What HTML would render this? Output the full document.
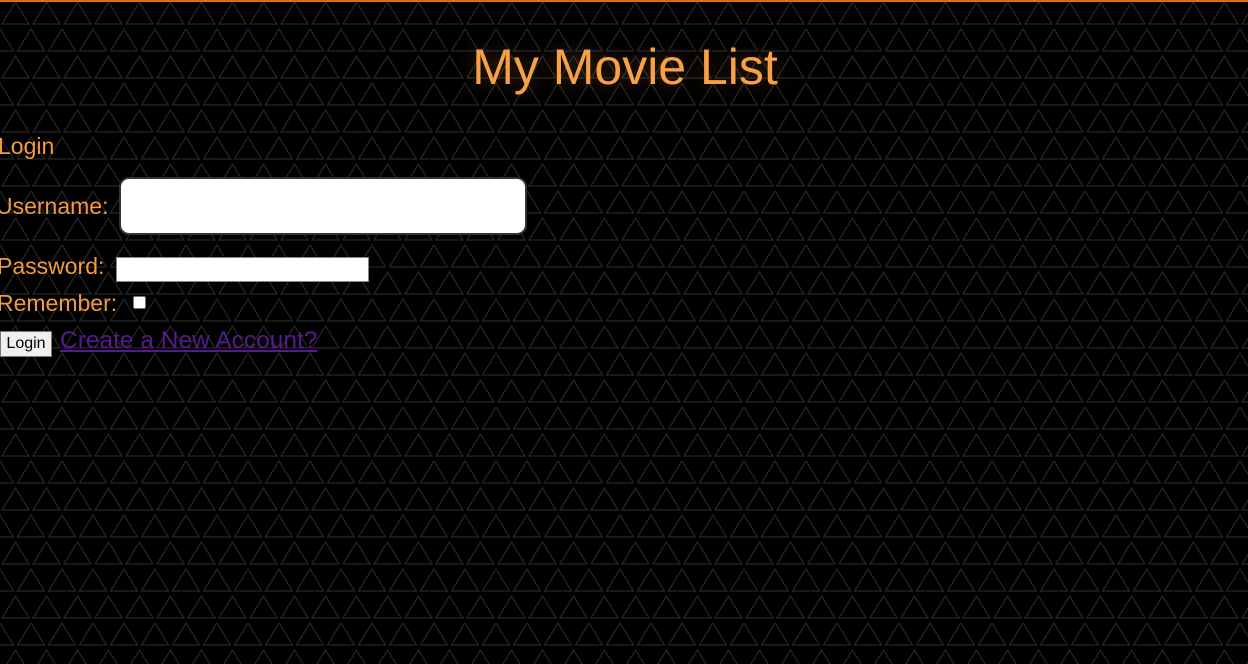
<!DOCTYPE html>
<html><head><style>
html,body{margin:0;padding:0;width:1248px;height:664px;overflow:hidden;background:#000;}
body{font-family:"Liberation Sans",Arial,sans-serif;color:#f39a3c;position:relative;}
.bg{position:absolute;left:0;top:0;}
.top{position:absolute;left:0;top:0;width:1248px;height:2px;background:#e56a0b;}
.abs{position:absolute;white-space:nowrap;}
h1{position:absolute;left:0;width:1250px;top:38px;margin:0;text-align:center;font-weight:normal;font-size:50px;color:#f7a044;text-shadow:0 0 20px rgba(247,160,68,.3);}
.lbl{font-size:23px;color:#f39a3c;}
</style></head><body>
<svg class="bg" width="1248" height="664">
<defs><pattern id="p" width="31" height="54" patternUnits="userSpaceOnUse">
<g fill="none" stroke="#262626" stroke-width="1.2">
<path d="M2 24 L15.5 2 L29 24 Z"/>
<path d="M17.5 51 L31 29 L44.5 51 Z"/>
<path d="M-13.5 51 L0 29 L13.5 51 Z"/>
</g></pattern></defs>
<rect width="1248" height="664" fill="url(#p)"/>
</svg>
<div class="top"></div>
<h1>My Movie List</h1>
<div class="abs lbl" style="left:-2px;top:133px">Login</div>
<div class="abs lbl" style="left:-4px;top:193px">Username:</div>
<div class="abs" style="left:119px;top:177px;width:404px;height:54px;background:#fff;border:2px solid #333;border-radius:10px"></div>
<div class="abs lbl" style="left:-3px;top:253px">Password:</div>
<div class="abs" style="left:116px;top:257px;height:25px;background:#fff;border:1px solid #888;box-sizing:border-box;width:253px"></div>
<div class="abs lbl" style="left:-3px;top:290px">Remember:</div>
<div class="abs" style="left:133px;top:296px;width:13px;height:13px;background:#fff;border:1px solid #777;border-radius:2px;box-sizing:border-box"></div>
<div class="abs" style="left:0;top:331px;width:52px;height:26px;background:#efefef;border:1px solid #767676;box-sizing:border-box;font-size:16px;color:#000;line-height:24px;text-align:center">Login</div>
<div class="abs" style="left:60px;top:327px;font-size:24.5px;color:#551a8b;text-decoration:underline">Create a New Account?</div>
</body></html>
